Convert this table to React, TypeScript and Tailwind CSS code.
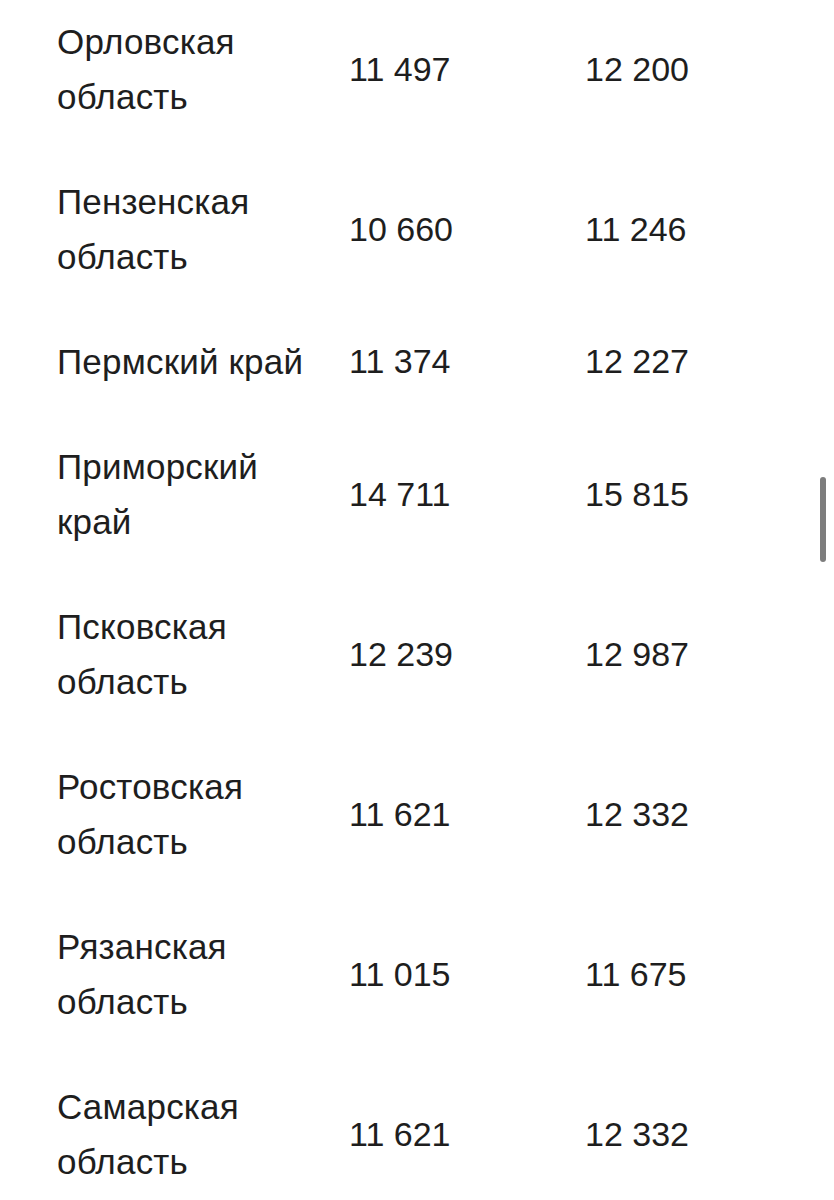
import React from 'react'

type Row = { region: string[]; a: string; b: string }

const rows: Row[] = [
  { region: ['Орловская', 'область'], a: '11 497', b: '12 200' },
  { region: ['Пензенская', 'область'], a: '10 660', b: '11 246' },
  { region: ['Пермский край'], a: '11 374', b: '12 227' },
  { region: ['Приморский', 'край'], a: '14 711', b: '15 815' },
  { region: ['Псковская', 'область'], a: '12 239', b: '12 987' },
  { region: ['Ростовская', 'область'], a: '11 621', b: '12 332' },
  { region: ['Рязанская', 'область'], a: '11 015', b: '11 675' },
  { region: ['Самарская', 'область'], a: '11 621', b: '12 332' },
]

export default function App() {
  return (
    <div
      className="relative w-[834px] h-[1200px] overflow-hidden bg-white text-[#1e1e1e]"
      style={{ fontFamily: '"Liberation Sans", Arial, sans-serif' }}
    >
      <div className="-mt-[11px] pl-[57px]">
        {rows.map((row, i) => (
          <div
            key={i}
            className="grid grid-cols-[292px_236px_1fr] items-center py-[25px] text-[34px] leading-[55px]"
          >
            <div className="text-[35px] tracking-[0.2px]">
              {row.region.map((line) => (
                <div key={line}>{line}</div>
              ))}
            </div>
            <div>{row.a}</div>
            <div>{row.b}</div>
          </div>
        ))}
      </div>
      {/* scroll indicator */}
      <div className="absolute left-[820px] top-[477px] w-[6px] h-[85px] rounded-full bg-[#7d7d7d]" />
    </div>
  )
}
